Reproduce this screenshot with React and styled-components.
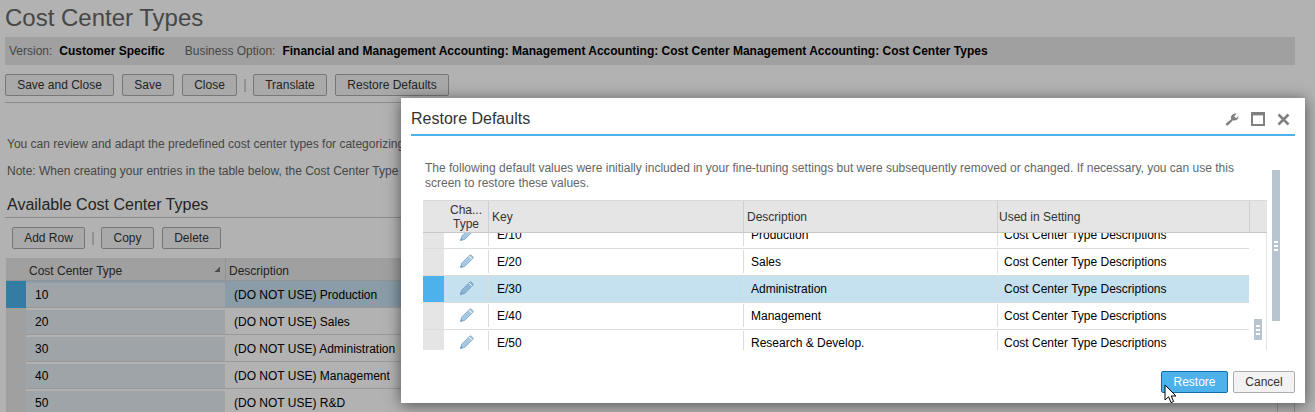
import React from 'react'
import styled, { createGlobalStyle } from 'styled-components'

const GlobalStyle = createGlobalStyle`
  html, body {
    margin: 0;
    padding: 0;
    background: #fff;
  }
  body {
    font-family: "Liberation Sans", Arial, sans-serif;
    font-size: 12px;
    color: #333;
    overflow: hidden;
  }
`

const Screen = styled.div`
  position: relative;
  width: 1315px;
  height: 412px;
  overflow: hidden;
`

const Page = styled.div`
  padding: 4px 20px 0 5px;
`

const PageTitle = styled.h1`
  margin: 0;
  height: 33px;
  font-size: 24px;
  line-height: 27px;
  font-weight: 400;
  color: #666;
`

const InfoBar = styled.div`
  display: flex;
  align-items: center;
  height: 28px;
  padding-left: 4px;
  background: #e5e5e5;
  color: #666;
`

const InfoLabel = styled.span`
  margin-right: 7px;
  &:not(:first-child) {
    margin-left: 20px;
  }
`

const InfoValue = styled.b`
  color: #000;
`

const Toolbar = styled.div`
  display: flex;
  align-items: center;
  gap: 8px;
  height: 22px;
  margin: ${p => p.$margin || 0};
`

const Button = styled.button`
  box-sizing: border-box;
  width: ${p => p.$w}px;
  height: 22px;
  padding: 0;
  border: 1px solid #ababab;
  border-radius: 2px;
  background: #f2f2f2;
  color: #333;
  font: 12px "Liberation Sans", Arial, sans-serif;
`

const ToolSep = styled.span`
  width: 2px;
  height: 13px;
  background: #d0d0d0;
  margin: 0 -1px;
`

const Rule = styled.div`
  height: 1px;
  background: #c8c8c8;
  margin: ${p => p.$margin};
`

const Para = styled.p`
  margin: 0 0 12px 2px;
  height: 15px;
  line-height: 15px;
  color: #666;
  white-space: nowrap;
`

const SectionTitle = styled.h2`
  margin: 16px 0 0 2px;
  height: 22px;
  font-size: 16px;
  line-height: 20px;
  font-weight: 400;
  color: #333;
`

const BgTable = styled.div`
  margin: 9px 0 0 1px;
  width: 1289px;
`

const BgHead = styled.div`
  display: grid;
  grid-template-columns: 20px 199px 1fr 18px;
  height: 23px;
  background: #e5e5e5;
  border-bottom: 1px solid #cdd5da;
  box-sizing: border-box;
  color: #333;
  line-height: 26px;
`

const BgHeadCell = styled.div`
  position: relative;
  padding-left: ${p => p.$pad || 3}px;
  border-left: ${p => (p.$line ? '1px solid #d3d3d3' : 0)};
`

const SortMark = styled.span`
  position: absolute;
  right: 5px;
  top: 9px;
  width: 5px;
  height: 4px;
  border-bottom: 1px solid #666;
  background: linear-gradient(135deg, transparent 50%, #777 50%);
`

const BgRow = styled.div`
  display: grid;
  grid-template-columns: 20px 199px 1fr 18px;
  height: 27px;
  box-sizing: border-box;
  border-bottom: 1px solid #dcdcdc;
  background: ${p => (p.$selected ? '#c5e0ef' : '#fff')};
  color: #000;
  line-height: 28px;
`

const RowMark = styled.div`
  background: ${p => (p.$selected ? '#4db2ec' : '#e5e5e5')};
`

const InputCell = styled.div`
  margin: 2px 0 2px 0;
  padding-left: 9px;
  background: #e2ebf1;
  line-height: 24px;
`

const TextCell = styled.div`
  padding-left: ${p => p.$pad || 9}px;
  white-space: nowrap;
  overflow: hidden;
`

const EndCell = styled.div`
  border-left: 1px solid #d3d3d3;
  border-right: 1px solid #d3d3d3;
`

const Veil = styled.div`
  position: absolute;
  inset: 0;
  background: rgba(0, 0, 0, 0.3);
`

const Dialog = styled.section`
  position: absolute;
  left: 401px;
  top: 98px;
  width: 904px;
  height: 305px;
  box-sizing: border-box;
  padding: 0 10px;
  background: #fff;
  box-shadow: 0 2px 14px rgba(0, 0, 0, 0.55);
  display: flex;
  flex-direction: column;
`

const DialogHead = styled.header`
  display: flex;
  align-items: center;
  justify-content: space-between;
  flex: none;
  height: 38px;
  box-sizing: border-box;
  padding-top: 6px;
  border-bottom: 2px solid #4db2ec;
`

const DialogTitle = styled.h3`
  margin: 0;
  font-size: 16px;
  font-weight: 400;
  color: #333;
`

const HeadIcons = styled.div`
  display: flex;
  align-items: center;
  gap: 12px;
  margin-right: 5px;
`

const DialogBody = styled.div`
  display: grid;
  grid-template-columns: 844px 1fr;
  grid-template-rows: 39px 1fr;
  column-gap: 5px;
  padding: 25px 0 0 12px;
  flex: 1;
  min-height: 0;
`

const Intro = styled.p`
  grid-column: 1;
  margin: 0 0 0 2px;
  line-height: 15px;
  color: #666;
`

const OuterScroll = styled.div`
  grid-column: 2;
  grid-row: 1 / span 2;
  align-self: start;
  display: flex;
  align-items: center;
  justify-content: center;
  width: 8px;
  height: 151px;
  margin-top: 9px;
  background: #b8c4cf;
`

const Grip = styled.span`
  width: 4px;
  height: 10px;
  background: repeating-linear-gradient(#fff 0 2px, transparent 2px 4px);
`

const PickTable = styled.div`
  grid-column: 1;
  width: 844px;
  height: 150px;
  overflow: hidden;
`

const PickHead = styled.div`
  display: grid;
  grid-template-columns: 21px 44px 255px 254px 252px 18px;
  height: 33px;
  box-sizing: border-box;
  background: #e5e5e5;
  border-top: 1px solid #d9d9d9;
  border-bottom: 1px solid #c8c8c8;
  color: #333;
`

const PickHeadCell = styled.div`
  display: flex;
  align-items: center;
  justify-content: ${p => (p.$center ? 'center' : 'flex-start')};
  padding-left: ${p => p.$pad ?? 0}px;
  text-align: ${p => (p.$center ? 'center' : 'left')};
  line-height: 14px;
  border-left: ${p => (p.$line ? '1px solid #cfcfcf' : 0)};
`

const PickBody = styled.div`
  position: relative;
  height: 117px;
  overflow: hidden;
`

const PickRows = styled.div`
  margin-top: -11px;
  margin-right: 18px;
`

const PickRow = styled.div`
  display: grid;
  grid-template-columns: 21px 44px 255px 254px 252px;
  height: 27px;
  box-sizing: border-box;
  background: ${p => (p.$selected ? '#c5e0ef' : '#fff')};
  border-bottom: 1px solid #dcdcdc;
  color: #000;
`

const PickCell = styled.div`
  display: flex;
  align-items: center;
  justify-content: ${p => (p.$center ? 'center' : 'flex-start')};
  padding-left: ${p => p.$pad ?? 0}px;
  margin: 1px 0 2px;
  border-left: ${p => (p.$line ? '1px solid #dcdcdc' : 0)};
`

const InnerScroll = styled.div`
  position: absolute;
  right: 5px;
  bottom: 10px;
  width: 8px;
  height: 21px;
  display: flex;
  align-items: center;
  justify-content: center;
  background: #b8c4cf;
`

const RightEdge = styled.div`
  position: absolute;
  right: 0;
  top: 0;
  bottom: 0;
  width: 1px;
  background: #e5e5e5;
`

const DialogFoot = styled.footer`
  display: flex;
  flex: none;
  justify-content: flex-end;
  gap: 5px;
  height: 32px;
`

const PrimaryButton = styled(Button)`
  background: #4db2ec;
  border-color: #0e6fa8;
  color: #fff;
`

const Cursor = styled.svg`
  position: absolute;
  left: 1164px;
  top: 384px;
`

const Pencil = ({ selected }) => (
  <svg width="15" height="15" viewBox="0 0 16 16">
    <path d="M1.5 14.5 L3 9.6 L11.4 1.2 Q12.2 .6 13 1.2 L14.8 3 Q15.4 3.8 14.8 4.6 L6.4 13 Z" fill={selected ? '#8db6d6' : '#a9c9e2'} stroke={selected ? '#6f9fc4' : '#82abcc'} strokeWidth="1" />
    <path d="M10.6 2.2 L13.8 5.4" stroke="#fff" strokeWidth="1" fill="none" />
    <path d="M1.5 14.5 L2.3 11.8 L4.2 13.7 Z" fill="#6f9cc0" />
  </svg>
)

const bgRows = [
  ['10', 'Production'],
  ['20', 'Sales'],
  ['30', 'Administration'],
  ['40', 'Management'],
  ['50', 'R&D'],
]

const pickRows = [
  ['E/10', 'Production'],
  ['E/20', 'Sales'],
  ['E/30', 'Administration'],
  ['E/40', 'Management'],
  ['E/50', 'Research & Develop.'],
]

export default function App() {
  return (
    <Screen>
      <GlobalStyle />
      <Page>
        <PageTitle>Cost Center Types</PageTitle>
        <InfoBar>
          <InfoLabel>Version:</InfoLabel>
          <InfoValue>Customer Specific</InfoValue>
          <InfoLabel>Business Option:</InfoLabel>
          <InfoValue>Financial and Management Accounting: Management Accounting: Cost Center Management Accounting: Cost Center Types</InfoValue>
        </InfoBar>
        <Toolbar $margin="9px 0 0">
          <Button $w={109}>Save and Close</Button>
          <Button $w={52}>Save</Button>
          <Button $w={55}>Close</Button>
          <ToolSep />
          <Button $w={74}>Translate</Button>
          <Button $w={114}>Restore Defaults</Button>
        </Toolbar>
        <Rule $margin="6px 0 34px" />
        <Para>You can review and adapt the predefined cost center types for categorizing</Para>
        <Para>Note: When creating your entries in the table below, the Cost Center Type</Para>
        <SectionTitle>Available Cost Center Types</SectionTitle>
        <Rule $margin="0" />
        <Toolbar $margin="9px 0 0 7px">
          <Button $w={73}>Add Row</Button>
          <ToolSep />
          <Button $w={53}>Copy</Button>
          <Button $w={59}>Delete</Button>
        </Toolbar>
        <BgTable>
          <BgHead>
            <div />
            <BgHeadCell $pad={3}>Cost Center Type<SortMark /></BgHeadCell>
            <BgHeadCell $line>Description</BgHeadCell>
            <EndCell />
          </BgHead>
          {bgRows.map(([type, name], i) => (
            <BgRow key={type} $selected={i === 0}>
              <RowMark $selected={i === 0} />
              <InputCell>{type}</InputCell>
              <TextCell>(DO NOT USE) {name}</TextCell>
              <EndCell />
            </BgRow>
          ))}
        </BgTable>
      </Page>
      <Veil />
      <Dialog>
        <DialogHead>
          <DialogTitle>Restore Defaults</DialogTitle>
          <HeadIcons>
            <svg width="14" height="14" viewBox="0 0 14 14">
              <path d="M1 11.6 L6.2 7.2 Q5.2 4 7.6 2.4 Q9.4 1.2 11.6 1.8 L9.2 4.2 L10 5.6 L11.6 6 L13.4 3.8 Q13.8 6.2 12.2 7.6 Q10.4 9.2 8 8.2 L3 13.2 Q2 13.8 1.2 13 Q.6 12.2 1 11.6 Z" fill="#808080" />
            </svg>
            <svg width="14" height="14" viewBox="0 0 14 14">
              <path d="M1 1 H13 V13 H1 Z" fill="none" stroke="#808080" strokeWidth="2" />
              <path d="M0 0 H14 V3.4 H0 Z" fill="#808080" />
            </svg>
            <svg width="13" height="13" viewBox="0 0 13 13">
              <path d="M1.5 1.5 L11.5 11.5 M11.5 1.5 L1.5 11.5" stroke="#808080" strokeWidth="2.6" />
            </svg>
          </HeadIcons>
        </DialogHead>
        <DialogBody>
          <Intro>The following default values were initially included in your fine-tuning settings but were subsequently removed or changed. If necessary, you can use this screen to restore these values.</Intro>
          <OuterScroll><Grip /></OuterScroll>
          <PickTable>
            <PickHead>
              <div />
              <PickHeadCell $center>Cha...<br />Type</PickHeadCell>
              <PickHeadCell $line $pad={3}>Key</PickHeadCell>
              <PickHeadCell $line $pad={3}>Description</PickHeadCell>
              <PickHeadCell $line $pad={1}>Used in Setting</PickHeadCell>
              <PickHeadCell $line />
            </PickHead>
            <PickBody>
              <PickRows>
                {pickRows.map(([key, text], i) => (
                  <PickRow key={key} $selected={i === 2}>
                    <RowMark $selected={i === 2} />
                    <PickCell $center><Pencil selected={i === 2} /></PickCell>
                    <PickCell $line $pad={8}>{key}</PickCell>
                    <PickCell $line $pad={7}>{text}</PickCell>
                    <PickCell $line $pad={6}>Cost Center Type Descriptions</PickCell>
                  </PickRow>
                ))}
              </PickRows>
              <InnerScroll><Grip /></InnerScroll>
              <RightEdge />
            </PickBody>
          </PickTable>
        </DialogBody>
        <DialogFoot>
          <PrimaryButton $w={67}>Restore</PrimaryButton>
          <Button $w={62}>Cancel</Button>
        </DialogFoot>
      </Dialog>
      <Cursor width="14" height="21" viewBox="0 0 14 21">
        <path d="M1 1 V16 L4.6 12.8 L7 18.6 L9.6 17.5 L7.2 12 H12 Z" fill="#fff" stroke="#000" strokeWidth="1" />
      </Cursor>
    </Screen>
  )
}
